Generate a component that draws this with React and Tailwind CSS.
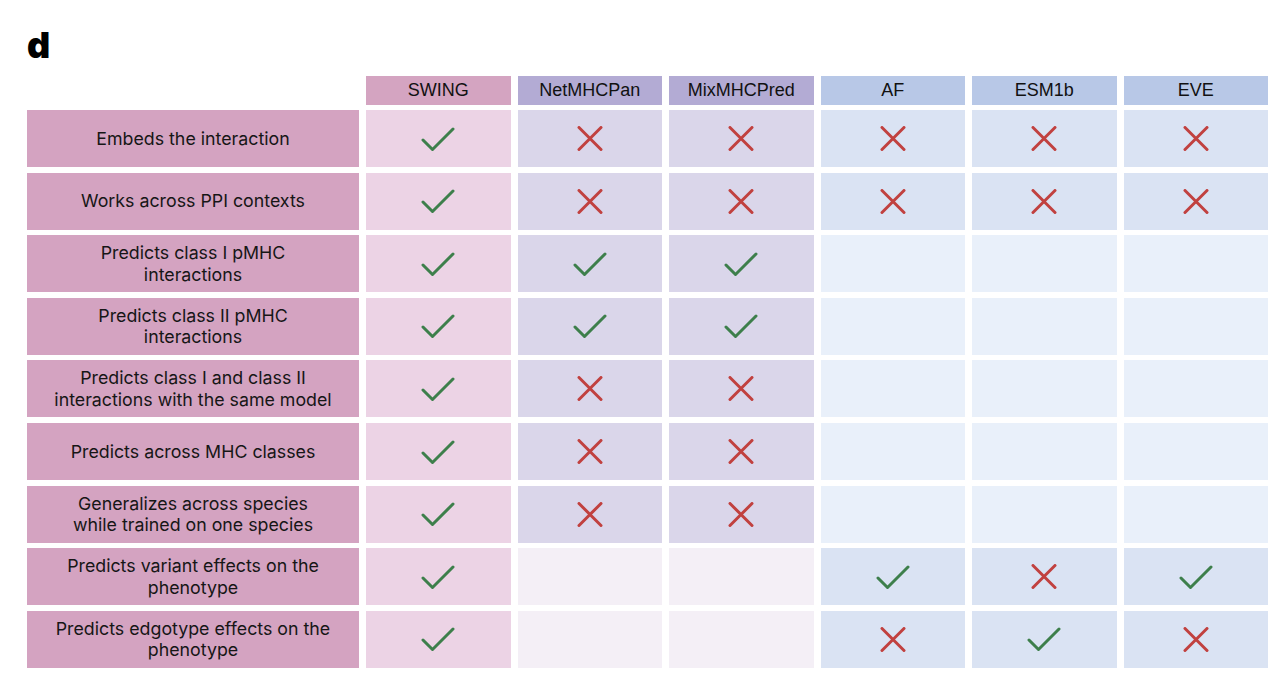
import React from 'react';

const columns = [
  { name: 'SWING', head: 'bg-[#d4a4c1]', cell: 'bg-[#ecd3e5]', empty: 'bg-[#f4eef5]' },
  { name: 'NetMHCPan', head: 'bg-[#b3abd4]', cell: 'bg-[#dad6ea]', empty: 'bg-[#f4eff6]' },
  { name: 'MixMHCPred', head: 'bg-[#b3abd4]', cell: 'bg-[#dad6ea]', empty: 'bg-[#f4eff6]' },
  { name: 'AF', head: 'bg-[#b8c8e7]', cell: 'bg-[#dae3f3]', empty: 'bg-[#e9f0fa]' },
  { name: 'ESM1b', head: 'bg-[#b8c8e7]', cell: 'bg-[#dae3f3]', empty: 'bg-[#e9f0fa]' },
  { name: 'EVE', head: 'bg-[#b8c8e7]', cell: 'bg-[#dae3f3]', empty: 'bg-[#e9f0fa]' },
];

// y = check, n = cross, null = empty cell
const rows = [
  { label: ['Embeds the interaction'], marks: ['y', 'n', 'n', 'n', 'n', 'n'] },
  { label: ['Works across PPI contexts'], marks: ['y', 'n', 'n', 'n', 'n', 'n'] },
  { label: ['Predicts class I pMHC', 'interactions'], marks: ['y', 'y', 'y', null, null, null] },
  { label: ['Predicts class II pMHC', 'interactions'], marks: ['y', 'y', 'y', null, null, null] },
  { label: ['Predicts class I and class II', 'interactions with the same model'], marks: ['y', 'n', 'n', null, null, null] },
  { label: ['Predicts across MHC classes'], marks: ['y', 'n', 'n', null, null, null] },
  { label: ['Generalizes across species', 'while trained on one species'], marks: ['y', 'n', 'n', null, null, null] },
  { label: ['Predicts variant effects on the', 'phenotype'], marks: ['y', null, null, 'y', 'n', 'y'] },
  { label: ['Predicts edgotype effects on the', 'phenotype'], marks: ['y', null, null, 'n', 'y', 'n'] },
];

function Check() {
  return (
    <svg width="34" height="26" viewBox="0 0 34 26" fill="none">
      <path d="M2 14 L11.5 23.5 L32 3" stroke="#3d7f4b" strokeWidth="3" strokeLinecap="round" strokeLinejoin="round" />
    </svg>
  );
}

function Cross() {
  return (
    <svg width="26" height="25" viewBox="0 0 26 25" fill="none">
      <path d="M2 1.5 L24 23.5 M24 1.5 L2 23.5" stroke="#c1413f" strokeWidth="3" strokeLinecap="round" />
    </svg>
  );
}

export default function App() {
  return (
    <div className="w-[1280px] h-[691px] bg-white pl-[27px] font-['Inter',sans-serif] text-[#161616]">
      <div className="h-[76px] pt-[27px]">
        <div className="text-[36px] leading-[36px] font-black text-black">d</div>
      </div>

      <div className="grid grid-cols-[332px_repeat(6,144.5px)] gap-x-[7px] gap-y-[5.6px]">
        <div className="h-[28.5px]" />
        {columns.map((c) => (
          <div
            key={c.name}
            className={`${c.head} h-[28.5px] flex items-center justify-center font-['Liberation_Sans',sans-serif] text-[18px] text-[#111]`}
          >
            {c.name}
          </div>
        ))}

        {rows.map((r, i) => (
          <React.Fragment key={i}>
            <div className="bg-[#d4a3c1] h-[57px] flex flex-col items-center justify-center text-[17.8px] leading-[21.5px] text-center">
              {r.label.map((l) => (
                <span key={l}>{l}</span>
              ))}
            </div>
            {r.marks.map((m, j) => (
              <div
                key={j}
                className={`${m ? columns[j].cell : columns[j].empty} h-[57px] flex items-center justify-center`}
              >
                {m === 'y' && <Check />}
                {m === 'n' && <Cross />}
              </div>
            ))}
          </React.Fragment>
        ))}
      </div>
    </div>
  );
}
